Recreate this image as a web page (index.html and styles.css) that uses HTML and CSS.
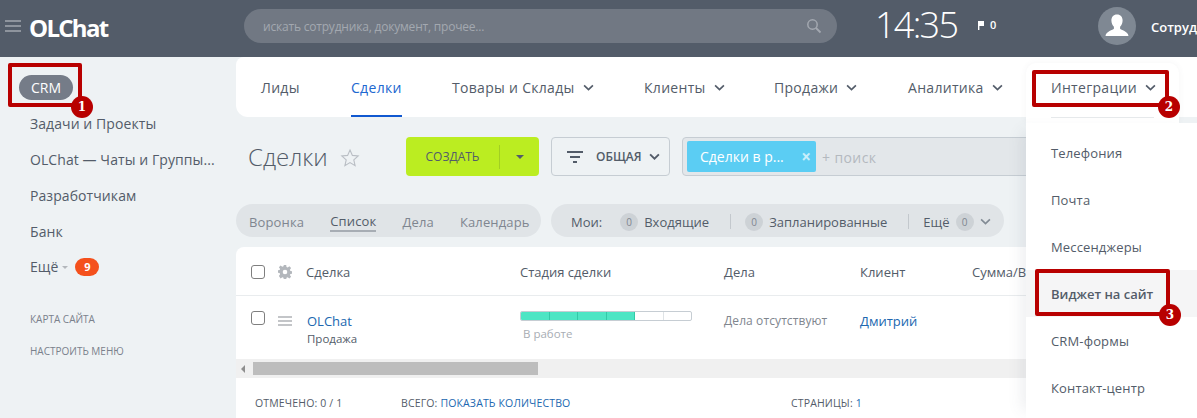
FILE: index.html
```html
<!DOCTYPE html>
<html lang="ru">
<head>
<meta charset="utf-8">
<title>OLChat — Сделки</title>
<link rel="stylesheet" href="styles.css">
</head>
<body>
<div class="app">
  <header class="topbar">
    <div class="burger"><i></i><i></i><i></i></div>
    <div class="logo">OLChat</div>
    <div class="search">
      <span>искать сотрудника, документ, прочее...</span>
      <svg class="search-ico" width="16" height="16" viewBox="0 0 16 16"><circle cx="6.5" cy="6.5" r="4.7" fill="none" stroke="#a3a8b0" stroke-width="1.5"/><path d="M10 10l4.5 4.5" stroke="#a3a8b0" stroke-width="1.8"/></svg>
    </div>
    <div class="clock">14:35</div>
    <div class="flag">
      <svg width="7" height="10" viewBox="0 0 7 10"><path d="M0 1h6v5H1.400v4H0z" fill="#fff"/></svg>
      <span>0</span>
    </div>
    <div class="avatar">
      <svg width="26" height="26" viewBox="0 0 26 26"><path d="M13 1.500c3.700 0 5.600 2.600 5.600 6 0 2.500-1 5-2.500 6.300v2c.8 1.200 7.900 2.500 8.400 7.200H1.500c.5-4.700 7.600-6 8.400-7.200v-2C8.400 12.500 7.400 10 7.400 7.500c0-3.400 1.900-6 5.600-6z" fill="#fff"/></svg>
    </div>
    <div class="user">Сотрудник</div>
  </header>

  <div class="main">
    <aside class="side">
      <div class="side-crm"><span>CRM</span></div>
      <a class="side-item">Задачи и Проекты</a>
      <a class="side-item">OLChat — Чаты и Группы...</a>
      <a class="side-item">Разработчикам</a>
      <a class="side-item">Банк</a>
      <a class="side-item side-more">Ещё <i class="tri"></i><b class="count">9</b></a>
      <a class="side-small first">КАРТА САЙТА</a>
      <a class="side-small">НАСТРОИТЬ МЕНЮ</a>
    </aside>

    <div class="content">
      <nav class="nav">
        <a class="nav-item n1">Лиды</a>
        <a class="nav-item n2 active">Сделки</a>
        <a class="nav-item n3">Товары и Склады<svg class="chev" viewBox="0 0 10 6"><path d="M1 1l4 4 4-4" fill="none" stroke="#535c69" stroke-width="1.500"/></svg></a>
        <a class="nav-item n4">Клиенты<svg class="chev" viewBox="0 0 10 6"><path d="M1 1l4 4 4-4" fill="none" stroke="#535c69" stroke-width="1.500"/></svg></a>
        <a class="nav-item n5">Продажи<svg class="chev" viewBox="0 0 10 6"><path d="M1 1l4 4 4-4" fill="none" stroke="#535c69" stroke-width="1.500"/></svg></a>
        <a class="nav-item n6">Аналитика<svg class="chev" viewBox="0 0 10 6"><path d="M1 1l4 4 4-4" fill="none" stroke="#535c69" stroke-width="1.500"/></svg></a>
      </nav>

      <div class="titlebar">
        <h1 class="title">Сделки</h1>
        <svg class="star" width="20" height="20" viewBox="0 0 20 20"><path d="M10 2l2.400 5.400 5.800.6-4.400 3.900 1.300 5.700L10 14.600l-5.100 3 1.300-5.700L1.800 8l5.800-.6z" fill="none" stroke="#b9bec4" stroke-width="1.100"/></svg>
        <div class="create">
          <span class="create-label">СОЗДАТЬ</span>
          <span class="create-arrow"><i></i></span>
        </div>
        <div class="preset">
          <svg width="16" height="12" viewBox="0 0 16 12"><path d="M0 0h16v2H0zM3 5h10v2H3zM6 10h4v2H6z" fill="#535c69"/></svg>
          <span>ОБЩАЯ</span>
          <svg class="chev2" viewBox="0 0 10 6"><path d="M1 1l4 4 4-4" fill="none" stroke="#535c69" stroke-width="1.700"/></svg>
        </div>
        <div class="filter">
          <div class="chip"><span>Сделки в р...</span><b>×</b></div>
          <span class="plus">+ поиск</span>
        </div>
      </div>

      <div class="tabs">
        <div class="pill views">
          <a>Воронка</a>
          <a class="cur">Список</a>
          <a>Дела</a>
          <a>Календарь</a>
        </div>
        <div class="pill counters">
          <span class="my">Мои:</span>
          <b class="zero">0</b><span>Входящие</span>
          <i class="sep"></i>
          <b class="zero">0</b><span>Запланированные</span>
          <i class="sep"></i>
          <span>Ещё</span><b class="zero last">0</b>
          <svg class="chev3" viewBox="0 0 10 6"><path d="M1 1l4 4 4-4" fill="none" stroke="#828b95" stroke-width="1.500"/></svg>
        </div>
      </div>

      <div class="table">
        <div class="row head">
          <i class="check"></i>
          <svg class="gear" width="14" height="14" viewBox="0 0 14 14"><path d="M5.800 0h2.400l.3 2 1.200.5 1.700-1.200 1.700 1.700-1.200 1.700.5 1.200 2 .3v2.400l-2 .3-.5 1.200 1.200 1.700-1.700 1.700-1.700-1.200-1.200.5-.3 2H5.800l-.3-2-1.200-.5-1.700 1.200L.900 11l1.200-1.700-.5-1.200-2-.3V5.400l2-.3.5-1.200L.9 2.200 2.600.5l1.700 1.200 1.200-.5zM7 4.700a2.300 2.300 0 100 4.600 2.300 2.300 0 000-4.600z" fill="#b3b7bc" fill-rule="evenodd"/></svg>
          <span>Сделка</span>
          <span>Стадия сделки</span>
          <span>Дела</span>
          <span>Клиент</span>
          <span>Сумма/Валюта</span>
        </div>
        <div class="row deal">
          <i class="check"></i>
          <div class="lines"><i></i><i></i><i></i></div>
          <div class="cell-name"><a class="link">OLChat</a><small>Продажа</small></div>
          <div class="cell-stage">
            <div class="progress"><i class="on"></i><i class="on"></i><i class="on"></i><i class="on"></i><i></i><i></i></div>
            <small>В работе</small>
          </div>
          <div class="cell-none">Дела отсутствуют</div>
          <div class="cell-client">Дмитрий</div>
          <div></div>
        </div>
        <div class="scroll">
          <i class="scroll-arrow"></i>
          <i class="scroll-thumb"></i>
        </div>
        <div class="foot">
          <span class="f1">ОТМЕЧЕНО: <b>0 / 1</b></span>
          <span class="f2">ВСЕГО: <a>ПОКАЗАТЬ КОЛИЧЕСТВО</a></span>
          <span class="f3">СТРАНИЦЫ: <a>1</a></span>
        </div>
      </div>
    </div>
  </div>

  <div class="menu-tab">
    <div class="menu-tab-label">Интеграции<svg class="chev" viewBox="0 0 10 6"><path d="M1 1l4 4 4-4" fill="none" stroke="#535c69" stroke-width="1.500"/></svg></div>
    <div class="menu-rule"></div>
  </div>
  <div class="menu">
    <a>Телефония</a>
    <a>Почта</a>
    <a>Мессенджеры</a>
    <a class="hover">Виджет на сайт</a>
    <a>CRM-формы</a>
    <a>Контакт-центр</a>
  </div>

  <div class="mark m1"></div><b class="badge b1">1</b>
  <div class="mark m2"></div><b class="badge b2">2</b>
  <div class="mark m3"></div><b class="badge b3">3</b>
</div>
</body>
</html>
```
FILE: styles.css
```css
* { box-sizing: border-box; }
html, body { margin: 0; padding: 0; }
body { font-family: "Open Sans", "Liberation Sans", sans-serif; color: #535c69; background: #eef2f4; }
a { color: inherit; text-decoration: none; }
i { display: block; }
.app { position: relative; width: 1197px; height: 418px; overflow: hidden; }

/* top bar */
.topbar { height: 57px; background: #535c69; display: flex; align-items: center; white-space: nowrap; }
.burger { width: 16px; flex: none; margin-left: 5px; margin-bottom: 5px; display: flex; flex-direction: column; gap: 3px; }
.burger i { height: 2px; background: #8e949d; }
.logo { margin-left: 8px; font-size: 24px; font-weight: 700; color: #fff; letter-spacing: -1.700px; width: 215px; flex: none; padding-bottom: 3px; }
.search { width: 593px; height: 34px; margin-bottom: 5px; border-radius: 17px; background: #717883; display: flex; align-items: center; justify-content: space-between; padding: 0 15px 0 19px; font-size: 12px; letter-spacing: -.2px; color: #a3a8b0; flex: none; }
.clock { margin-left: 38px; font-size: 36px; font-weight: 300; color: #fff; width: 103px; flex: none; line-height: 1; padding-bottom: 7px; letter-spacing: -1.700px; }
.flag { display: flex; align-items: center; gap: 5px; color: #fff; font-size: 11px; font-weight: 600; width: 120px; flex: none; padding-bottom: 8px; }
.avatar { width: 38px; height: 38px; border-radius: 50%; background: #7f8893; display: flex; align-items: center; justify-content: center; flex: none; margin-bottom: 5px; overflow: hidden; }
.user { margin-left: 15px; font-size: 13px; font-weight: 600; color: #fff; padding-bottom: 3px; }

.main { display: flex; height: 361px; }

/* sidebar */
.side { width: 236px; flex: none; padding: 18px 0 0 30px; display: flex; flex-direction: column; }
.side-crm { margin-left: -11px; height: 25px; margin-bottom: 6px; }
.side-crm span { display: inline-flex; align-items: center; justify-content: center; width: 54px; height: 25px; border-radius: 13px; background: #757c88; color: #fff; font-size: 14px; }
.side-item { height: 36px; line-height: 36px; font-size: 14px; letter-spacing: .08px; color: #535c69; white-space: nowrap; overflow: hidden; width: 190px; }
.side-more { display: flex; align-items: center; overflow: visible; gap: 4px; padding-bottom: 2px; }
.tri { width: 0; height: 0; border: 3px solid transparent; border-top: 3px solid #b3b7bc; border-bottom: 0; margin-right: 3px; }
.count { width: 24px; height: 18px; border-radius: 9px; background: #f4501c; color: #fff; font-size: 11px; line-height: 18px; text-align: center; font-weight: 700; }
.side-small { font-size: 10px; font-weight: 500; color: #7a818c; height: 32px; line-height: 32px; white-space: nowrap; }
.side-small.first { margin-top: 17px; }

/* content */
.content { flex: 1; min-width: 0; display: flex; flex-direction: column; }
.nav { height: 60px; background: #fff; border-radius: 8px 0 0 12px; display: flex; align-items: stretch; font-size: 14px; letter-spacing: .3px; white-space: nowrap; }
.nav-item { display: flex; align-items: center; gap: 8px; position: relative; flex: none; }
.n1 { margin-left: 25px; width: 90px; }
.n3 { width: 192px; }
.n4 { width: 130px; }
.n5 { width: 134px; }
.active { color: #2067d0; width: 51px; margin-right: 50px; }
.active::after { content: ""; position: absolute; left: 0; right: 0; bottom: 0; height: 2px; background: #1058d0; }
.chev { width: 11px; height: 7px; flex: none; }

.titlebar { height: 39px; margin-top: 20px; display: flex; align-items: stretch; white-space: nowrap; }
.title { margin: 0 0 0 12px; font-size: 24px; font-weight: 300; color: #535c69; width: 92px; line-height: 39px; flex: none; }
.star { flex: none; margin-top: 11px; }
.create { margin-left: 46px; width: 133px; flex: none; background: #bbed21; border-radius: 4px; display: flex; align-items: center; color: #535c69; font-size: 12px; font-weight: 500; }
.create-label { width: 94px; text-align: center; border-right: 1px solid #a2cf22; height: 24px; line-height: 24px; }
.create-arrow { flex: 1; display: flex; justify-content: center; }
.create-arrow i { width: 0; height: 0; border: 4px solid transparent; border-top: 4px solid #535c69; border-bottom: 0; }
.preset { margin-left: 12px; width: 119px; flex: none; border: 1px solid #c6cdd3; border-radius: 4px; display: flex; align-items: center; padding-left: 15px; font-size: 12px; font-weight: 600; }
.preset span { margin-left: 13px; }
.chev2 { width: 11px; height: 7px; margin-left: 7px; }
.filter { margin-left: 12px; flex: 1; background: #e3e7ea; border: 1px solid #c6cdd3; border-radius: 4px; display: flex; align-items: center; padding-left: 4px; }
.chip { width: 129px; height: 31px; background: #5bcdf3; border-radius: 2px; color: #fff; font-size: 14px; display: flex; align-items: center; justify-content: space-between; padding: 0 5px 0 13px; }
.chip b { font-size: 17px; font-weight: 700; color: #c9effb; }
.plus { margin-left: 6px; font-size: 14px; letter-spacing: .4px; color: #b4b9bf; padding-top: 2px; }

.tabs { height: 33px; margin-top: 28px; display: flex; gap: 10px; font-size: 13px; white-space: nowrap; }
.pill { height: 33px; padding-top: 2px; border-radius: 17px; background: #e0e4e7; display: flex; align-items: center; flex: none; }
.views { width: 305px; padding-left: 13px; gap: 26px; color: #7f8690; letter-spacing: .15px; }
.cur { color: #535c69; box-shadow: 0 2px 0 #a7adb4; line-height: 17px; }
.counters { width: 453px; padding-left: 20px; }
.my { margin-right: 18px; }
.zero { width: 18px; height: 18px; border-radius: 50%; background: #cdd2d6; color: #7f8690; font-size: 10px; font-weight: 400; text-align: center; line-height: 18px; margin-right: 6px; flex: none; }
.sep { width: 1px; height: 15px; background: #c3c8cd; margin: 0 14px 0 21px; flex: none; }
.zero.last { margin: 0 0 0 6px; }
.chev3 { width: 11px; height: 7px; margin-left: 6px; }

.table { margin-top: 10px; background: #fff; flex: 1; border-radius: 8px 0 0 0; overflow: hidden; position: relative; }
.row { display: grid; grid-template-columns: 27px 28px 214px 204px 136px 112px 200px; padding-left: 15px; white-space: nowrap; }
.head { height: 49px; align-items: center; border-bottom: 1px solid #e9ecee; font-size: 13px; color: #535c69; padding-top: 1px; }
.check { width: 14px; height: 14px; border: 1px solid #7f7f7f; border-radius: 3px; background: #fff; }
.deal { height: 63px; }
.deal .check { margin-top: 15px; }
.lines { margin-top: 20px; width: 14px; display: flex; flex-direction: column; gap: 2px; }
.lines i { height: 2px; background: #c3c5c8; }
.cell-name { padding-top: 15px; padding-left: 1px; }
.link { display: block; font-size: 13px; line-height: 20px; color: #2067b0; }
small { display: block; font-size: 11.500px; }
.cell-name small { line-height: 16px; color: #535c69; }
.cell-stage { padding-top: 15px; }
.progress { width: 172px; height: 10px; border: 1px solid #c6cdd3; border-radius: 2px; display: flex; overflow: hidden; }
.progress i { flex: 1; border-right: 1px solid #dfe3e6; }
.progress i:last-child { border-right: 0; }
.progress .on { background: #4de5c4; border-right-color: #33c9a8; }
.cell-stage small { margin: 6px 0 0 3px; color: #a8adb4; line-height: 14px; }
.cell-none { padding-top: 17px; font-size: 12px; letter-spacing: .1px; line-height: 16px; color: #80868e; }
.cell-client { padding-top: 15px; font-size: 13px; line-height: 20px; font-weight: 500; color: #2067b0; }
.scroll { height: 19px; background: #f0f0f0; position: relative; display: flex; align-items: center; }
.scroll-arrow { width: 0; height: 0; margin-left: 5px; border: 4px solid transparent; border-right: 4px solid #8e8e8e; border-left: 0; }
.scroll-thumb { width: 285px; height: 13px; margin-left: 8px; background: #bdbdbd; margin-top: -1px; }
.foot { display: flex; padding: 18px 0 0 19px; font-size: 10.500px; font-weight: 500; letter-spacing: .15px; line-height: 14px; color: #535c69; white-space: nowrap; }
.foot b { font-weight: 500; }
.foot a { color: #2067b0; }
.f1 { width: 146px; }
.f2 { width: 390px; }

/* opened dropdown */
.menu-tab { position: absolute; left: 1026px; top: 63px; width: 153px; height: 60px; background: #fff; border-radius: 10px 10px 0 0; box-shadow: 0 0 6px rgba(83, 92, 105, .06); padding-left: 25px; }
.menu-tab-label { display: flex; align-items: center; gap: 8px; height: 48px; font-size: 14px; letter-spacing: .3px; }
.menu-rule { margin-top: 6px; width: 103px; height: 1px; background: #e6e9eb; }
.menu { position: absolute; left: 1026px; top: 123px; width: 171px; height: 295px; padding-top: 6px; background: #fff; box-shadow: -12px 0 14px -8px rgba(83, 92, 105, .1); display: flex; flex-direction: column; }
.menu a { height: 47px; flex: none; line-height: 49px; padding-left: 25px; font-size: 13px; font-weight: 500; letter-spacing: .15px; color: #535c69; white-space: nowrap; }
.menu a.hover { background: #f5f5f6; font-weight: 600; letter-spacing: 0; }

/* annotation marks */
.mark { position: absolute; border: 4px solid #b80000; border-radius: 2px; }
.m1 { left: 8px; top: 63px; width: 74px; height: 44px; }
.m2 { left: 1032px; top: 70px; width: 137px; height: 37px; }
.m3 { left: 1035px; top: 269px; width: 135px; height: 47px; }
.badge { position: absolute; width: 22px; height: 22px; border-radius: 50%; background: #b80000; color: #fff; font: 700 12px/22px "DejaVu Serif", serif; text-align: center; }
.b1 { left: 71px; top: 96px; }
.b2 { left: 1158px; top: 96px; }
.b3 { left: 1159px; top: 304px; }
```
